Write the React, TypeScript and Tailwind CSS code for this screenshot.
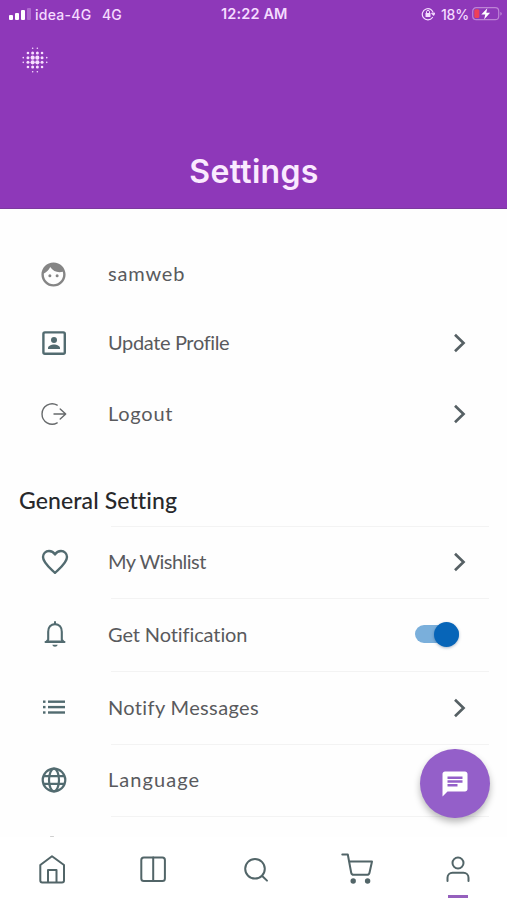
import type { ReactNode } from 'react'
import { MdChat, MdFace } from 'react-icons/md'

const stroke = { fill: 'none', stroke: 'currentColor', strokeLinecap: 'round', strokeLinejoin: 'round' } as const

function Chevron() {
  return (
    <svg width="14" height="20" viewBox="0 0 14 20" className="mr-px shrink-0 text-[#566064]">
      <path d="M2 1.8 10.5 10 2 18.2" fill="none" stroke="currentColor" strokeWidth="2.7" />
    </svg>
  )
}

function ProfileIcon() {
  return (
    <svg width="26" height="26" viewBox="0 0 26 26">
      <rect x="2.4" y="2.4" width="21.4" height="21.4" rx="1.5" fill="none" stroke="currentColor" strokeWidth="2.4" />
      <circle cx="13" cy="10" r="3" fill="currentColor" />
      <path d="M7 19v-1.1c0-2 3.5-3.4 6-3.4s6 1.4 6 3.4V19z" fill="currentColor" />
    </svg>
  )
}

function LogoutIcon() {
  return (
    <svg width="28" height="26" viewBox="0 0 28 26" className="text-[#66696b]">
      <path d="M17.2 4.1A10.2 10.2 0 1 0 17.2 21.9M14 13h11.6M20.2 7.9l5.5 5.1-5.5 5.1" {...stroke} strokeWidth="1.4" />
    </svg>
  )
}

function HeartIcon() {
  return (
    <svg width="28" height="26" viewBox="0 0 28 26" className="ml-[2px]">
      <path d="M14 23.8C10.6 20.4 2 14.2 2 8c0-3.3 2.6-6 6-6 2.4 0 4.7 1.3 6 3.4C15.3 3.3 17.6 2 20 2c3.4 0 6 2.7 6 6 0 6.2-8.6 12.4-12 15.8z" {...stroke} strokeWidth="2.4" />
    </svg>
  )
}

function BellIcon() {
  return (
    <svg width="26" height="28" viewBox="0 0 26 28" className="-mt-px ml-[2px]">
      <path d="M4.5 21.6 6.2 19.600v-7.900c0-4.300 2.600-7.600 6.800-7.600s6.800 3.300 6.800 7.600v7.900l1.700 2z" {...stroke} strokeWidth="2.1" />
      <path d="M3.5 22.1h19M13 1.9v2" {...stroke} strokeWidth="2" />
      <path d="M10.3 24.8h5.4c-.3 1.3-1.3 2-2.700 2s-2.400-.7-2.700-2z" fill="currentColor" />
    </svg>
  )
}

function ListIcon() {
  return (
    <svg width="24" height="16" viewBox="0 0 24 16" fill="currentColor" className="-mt-[2px]">
      {[1.5, 6.9, 12.3].map(y => (
        <g key={y}>
          <rect x="1" y={y} width="2.5" height="2.4" />
          <rect x="6" y={y} width="17" height="2.4" />
        </g>
      ))}
    </svg>
  )
}

function GlobeIcon() {
  return (
    <svg width="26" height="26" viewBox="0 0 26 26">
      <g {...stroke} strokeWidth="2.2">
        <circle cx="13" cy="13" r="11.3" />
        <ellipse cx="13" cy="13" rx="5" ry="11.3" />
        <path d="M3 9.2h20M3 16.8h20" />
      </g>
    </svg>
  )
}

function Row({ icon, label, height, spacing, children }: { icon: ReactNode; label: string; height: string; spacing: string; children?: ReactNode }) {
  return (
    <div className={`flex items-center pr-[39px] pl-[34px] ${height}`}>
      <div className="flex w-10 shrink-0 justify-center text-[#526b70]">{icon}</div>
      <span className={`-mt-[2px] ml-[34px] flex-1 text-[20px] leading-6 whitespace-nowrap text-[#595a5d] ${spacing}`}>{label}</span>
      {children}
    </div>
  )
}

function Divider() {
  return <div className="-mb-px mr-[18px] ml-[111px] h-px bg-[#f3f3f3]" />
}

function StatusBar() {
  return (
    <div className="flex h-7 items-center pr-1 pl-[9px] font-[Inter,sans-serif] text-[14px] text-[#f5dcff]">
      <div className="flex h-3 w-[22px] items-end gap-[2px]">
        <i className="h-[5px] w-1 rounded-[1px] bg-white" />
        <i className="h-[7px] w-1 rounded-[1px] bg-white" />
        <i className="h-[10px] w-1 rounded-[1px] bg-white" />
        <i className="h-3 w-1 rounded-[1px] bg-[#ae68cf]" />
      </div>
      <span className="ml-[4px] w-[67px] font-medium tracking-[0.25px] whitespace-nowrap">idea-4G</span>
      <span className="w-[119px] font-medium">4G</span>
      <span className="w-[200px] text-[14.5px] font-semibold tracking-[0.15px] whitespace-nowrap">12:22 AM</span>
      <svg width="14" height="14" viewBox="0 0 14 14">
        <path d="M11.5 10.5A5.6 5.6 0 1 1 12.500 7.300M10.8 6.3l1.8 1.9 1.2-2.1" {...stroke} strokeWidth="1.2" />
        <rect x="4.5" y="6" width="5" height="4" rx=".6" fill="currentColor" />
        <path d="M5.5 6V4.9a1.5 1.5 0 0 1 3 0V6" {...stroke} strokeWidth="1" />
      </svg>
      <span className="ml-[6px] w-[31px] text-[14px] font-medium tracking-[-0.2px]">18%</span>
      <svg width="30" height="16" viewBox="0 0 30 16" className="shrink-0">
        <rect x=".7" y="1.7" width="26" height="12" rx="3.5" fill="none" stroke="#bd83d5" strokeWidth="1.2" />
        <path d="M28.3 6v3.5c1-.4 1.5-1 1.5-1.8s-.5-1.4-1.5-1.7z" fill="#bd83d5" />
        <rect x="2.3" y="3.3" width="5" height="8.8" rx="1.5" fill="#ed4058" />
        <path d="m15.3 2.2-6 6.3h4l-1.2 5 6-6.7h-3.8z" fill="#fff" />
      </svg>
    </div>
  )
}

// radius of each dot in the halftone menu glyph
const dots = [
  [0, 0, .8, .8, 0, 0],
  [0, 1.3, 1.5, 1.5, 1.3, 0],
  [.8, 1.5, 2.1, 2.1, 1.5, .8],
  [.8, 1.5, 2.1, 2.1, 1.5, .8],
  [0, 1.3, 1.5, 1.5, 1.3, 0],
  [0, 0, .8, .8, 0, 0],
]

function DotsIcon() {
  return (
    <svg width="26" height="26" viewBox="0 0 26 26" fill="#f8dfff">
      {dots.map((line, y) => line.map((r, x) => r > 0 && <circle key={`${x}-${y}`} cx={13 + (x - 2.5) * 4.7} cy={13 + (y - 2.5) * 4.7} r={r} />))}
    </svg>
  )
}

function BottomNav() {
  return (
    <nav className="grid h-[63px] grid-cols-5 bg-white pt-[14px] text-[#526568]">
      <div className="flex justify-center">
        <svg width="32" height="36" viewBox="0 0 32 36" className="ml-[2px]">
          <path d="M4.3 14 16 5.2 28 14v15.5a2 2 0 0 1-2 2H6.300a2 2 0 0 1-2-2zM12 31V19h8.500v12" {...stroke} strokeWidth="2" />
        </svg>
      </div>
      <div className="flex justify-center">
        <svg width="32" height="36" viewBox="0 0 32 36" className="ml-[2px]">
          <rect x="4.3" y="6.4" width="23.6" height="23.6" rx="2.5" {...stroke} strokeWidth="2" />
          <path d="M16.2 6.5v23.5" {...stroke} strokeWidth="2" />
        </svg>
      </div>
      <div className="flex justify-center">
        <svg width="32" height="36" viewBox="0 0 32 36" className="ml-[5px]">
          <circle cx="15" cy="17.8" r="9.8" {...stroke} strokeWidth="2" />
          <path d="m22.2 25 4.8 4.6" {...stroke} strokeWidth="2" />
        </svg>
      </div>
      <div className="flex justify-center">
        <svg width="36" height="36" viewBox="0 0 36 36" className="ml-[4px]">
          <path d="M3.3 3.5h5.5l3.4 18.2a2.5 2.5 0 0 0 2.5 2H28a2.500 2.500 0 0 0 2.500-2L33 10.500H10" {...stroke} strokeWidth="2" />
          <circle cx="14.2" cy="30" r="2.7" fill="currentColor" />
          <circle cx="28.6" cy="30" r="2.7" fill="currentColor" />
        </svg>
      </div>
      <div className="flex flex-col items-center">
        <svg width="32" height="36" viewBox="0 0 32 36" className="ml-[4px] shrink-0">
          <circle cx="16" cy="12" r="5.5" {...stroke} strokeWidth="2" />
          <path d="M5.5 30v-3.200a5 5 0 0 1 5-5h11a5 5 0 0 1 5 5V30" {...stroke} strokeWidth="2" />
        </svg>
        <div className="mt-[8px] ml-[4px] h-[3px] w-5 shrink-0 bg-[#9560bd]" />
      </div>
    </nav>
  )
}

export default function App() {
  return (
    <div className="relative flex h-[900px] w-[507px] flex-col overflow-hidden bg-[#fefefe] font-[Lato,sans-serif]">
      <header className="h-[209px] shrink-0 border-b border-[#7c399e] bg-[#8e38b9]">
        <StatusBar />
        <div className="mt-[19px] ml-[22px]"><DotsIcon /></div>
        <h1 className="mt-[79px] pl-px text-center font-[Inter,sans-serif] text-[32px] leading-10 font-semibold tracking-[0.3px] text-[#faeaff]">Settings</h1>
      </header>

      <main className="h-[628px] shrink-0 overflow-hidden pt-[31px]">
        <Row icon={<MdFace size={29} className="-ml-px text-[#858585]" />} label="samweb" height="h-[68px]" spacing="tracking-[0.8px]" />
        <Row icon={<ProfileIcon />} label="Update Profile" height="h-[70px]" spacing="tracking-[-0.36px]"><Chevron /></Row>
        <Row icon={<LogoutIcon />} label="Logout" height="h-[72px]" spacing="tracking-[0.75px]"><Chevron /></Row>
        <h2 className="mt-[34px] mb-[10px] pl-[19px] text-[23px] leading-8 font-medium tracking-[0.1px] text-[#27282b]">General Setting</h2>
        <Divider />
        <Row icon={<HeartIcon />} label="My Wishlist" height="h-[72px]" spacing="tracking-[-0.53px]"><Chevron /></Row>
        <Divider />
        <Row icon={<BellIcon />} label="Get Notification" height="h-[73px]" spacing="tracking-[-0.1px]">
          <div className="-mt-px mr-[9px] flex h-[18px] w-[44px] items-center justify-end rounded-full bg-[#7aafdb]">
            <div className="h-[25px] w-[25px] shrink-0 rounded-full bg-[#0765b8] shadow-[0_1px_3px_rgba(0,50,100,0.35)]" />
          </div>
        </Row>
        <Divider />
        <Row icon={<ListIcon />} label="Notify Messages" height="h-[73px]" spacing="tracking-[0.36px]"><Chevron /></Row>
        <Divider />
        <Row icon={<GlobeIcon />} label="Language" height="h-[72px]" spacing="tracking-[1.05px]" />
        <Divider />
        <div className="mt-[20px] ml-[50px] h-px w-1 rounded-full bg-[#cfcfcf]" />
      </main>

      <BottomNav />
      <button className="absolute top-[749px] left-[420px] flex h-[69px] w-[70px] items-center justify-center rounded-full bg-[#945fc9] text-white shadow-[0_4px_7px_rgba(0,0,0,0.28)]">
        <MdChat size={30} />
      </button>
    </div>
  )
}
